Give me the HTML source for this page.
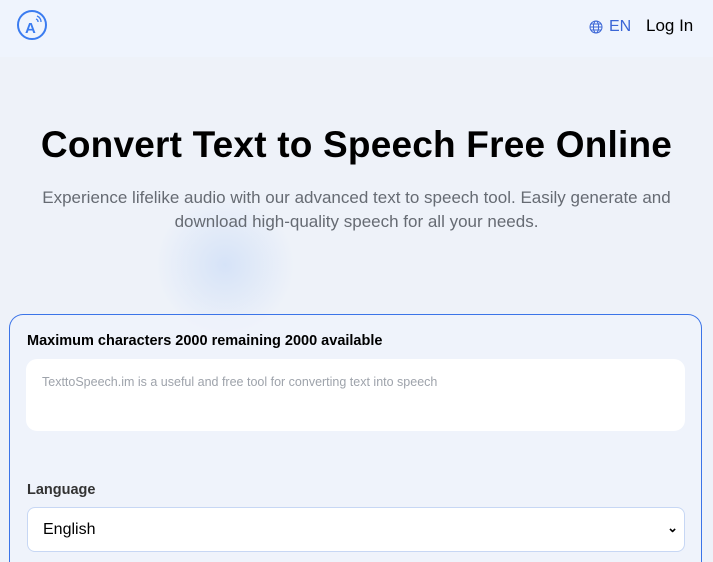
<!DOCTYPE html>
<html><head><meta charset="utf-8"><style>
*{box-sizing:border-box;margin:0;padding:0}
html,body{width:713px;height:562px;overflow:hidden}
body{background:#eef2f9;font-family:"Liberation Sans",sans-serif;position:relative}
.hdr{position:absolute;left:0;top:0;width:713px;height:57px;background:#eff4fd}
.blob{position:absolute;left:155px;top:195px;width:140px;height:140px;border-radius:50%;background:radial-gradient(circle,#d6e3f8 0%,rgba(220,230,248,0) 70%)}
h1{position:absolute;top:124px;left:0;width:713px;text-align:center;font-size:37px;font-weight:bold;color:#000;letter-spacing:0.2px}
.sub{position:absolute;top:186px;left:30px;width:653px;text-align:center;font-size:17px;line-height:24px;color:#666b73}
.card{position:absolute;left:9px;top:314px;width:693px;height:248px;border:1px solid #3b74e8;border-bottom:none;border-radius:14px 14px 0 0;background:rgba(240,244,251,.6)}
.t1{position:absolute;left:27px;top:333px;font-size:14.5px;font-weight:bold;color:#000}
.ta{position:absolute;left:26px;top:359px;width:659px;height:72px;background:#fff;border-radius:11px;padding:16px 16px;font-size:12.5px;color:#9ea3ab}
.lab{position:absolute;left:27px;top:482px;font-size:14.5px;font-weight:bold;color:#333}
.sel{position:absolute;left:27px;top:507px;width:658px;height:45px;background:#fff;border:1px solid #c7d7f4;border-radius:8px;font-size:16px;padding:13px 0 0 15px;color:#000}
</style></head><body>
<div class="hdr"></div>
<svg style="position:absolute;left:16px;top:9px" width="32" height="32" viewBox="0 0 32 32"><circle cx="16" cy="16" r="14" fill="none" stroke="#3b7cf0" stroke-width="2"/><text x="9" y="24" font-family="Liberation Sans" font-weight="bold" font-size="15" fill="#3b7cf0">A</text><path d="M20 10a3 3 0 0 1 2 3M21 7a6 6 0 0 1 4 6" stroke="#3b7cf0" stroke-width="1.3" fill="none"/></svg>
<svg style="position:absolute;left:589px;top:20px" width="14" height="14" viewBox="0 0 14 14"><g fill="none" stroke="#3b66d6" stroke-width="1"><circle cx="7" cy="7" r="6"/><ellipse cx="7" cy="7" rx="2.6" ry="6"/><path d="M1 7h12M2 4h10M2 10h10"/></g></svg>
<div style="position:absolute;left:609px;top:18px;font-size:16px;color:#3b66d6">EN</div>
<div style="position:absolute;left:646px;top:16px;font-size:17px;color:#000">Log In</div>
<div class="blob"></div>
<h1>Convert Text to Speech Free Online</h1>
<div class="sub">Experience lifelike audio with our advanced text to speech tool. Easily generate and download high-quality speech for all your needs.</div>
<div class="card"></div>
<div class="t1">Maximum characters 2000 remaining 2000 available</div>
<div class="ta">TexttoSpeech.im is a useful and free tool for converting text into speech</div>
<div class="lab">Language</div>
<div class="sel">English<span style="position:absolute;right:6px;top:12px;font-size:13px;font-weight:bold">&#8964;</span></div>
</body></html>
